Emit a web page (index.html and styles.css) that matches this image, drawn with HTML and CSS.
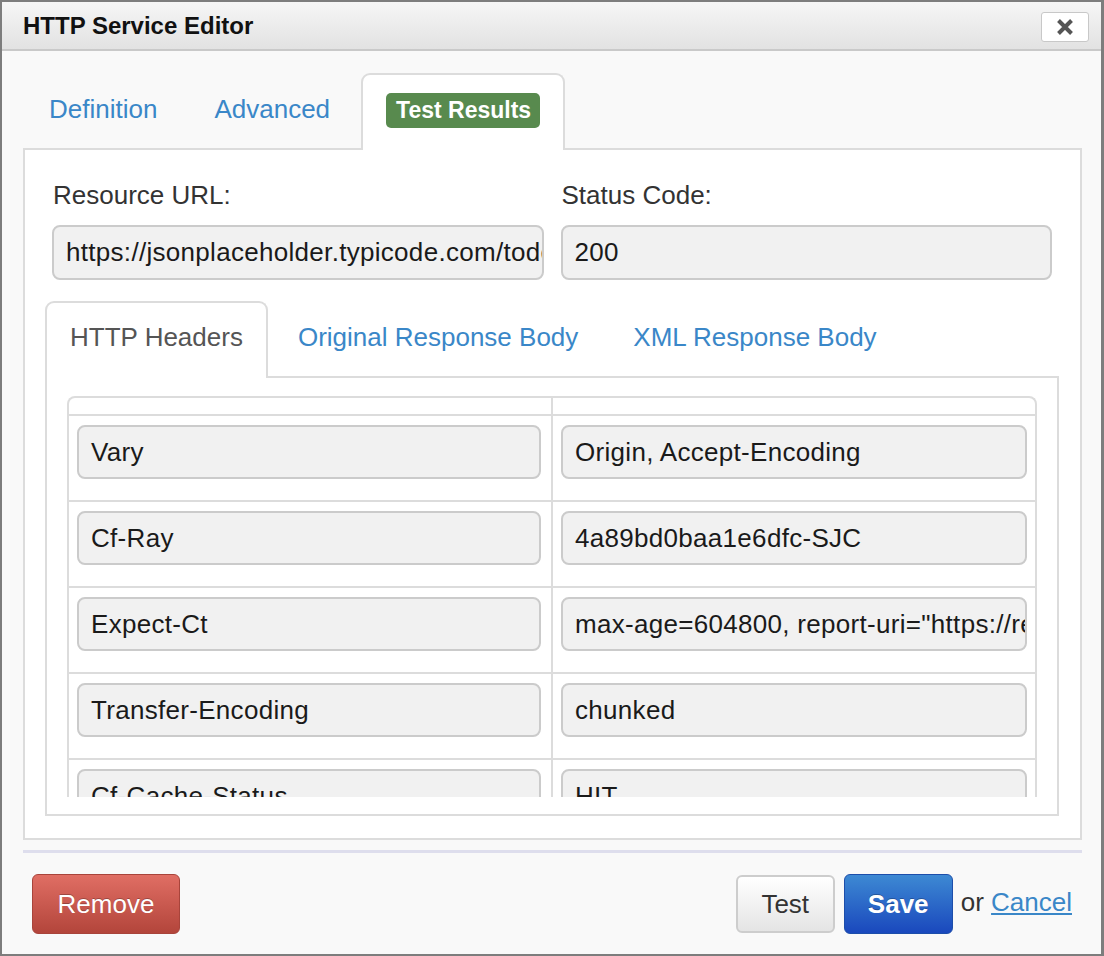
FILE: index.html
```html
<!DOCTYPE html>
<html>
<head>
<meta charset="utf-8">
<title>HTTP Service Editor</title>
<link rel="stylesheet" href="styles.css">
</head>
<body>
<div class="window">
  <div class="titlebar">
    <h1 class="title">HTTP Service Editor</h1>
    <button class="close" aria-label="Close">
      <svg width="18" height="18" viewBox="0 0 18 18"><path d="M2.5 2.5 L15.5 15.5 M15.5 2.5 L2.5 15.5" stroke="#555" stroke-width="4" fill="none"/></svg>
    </button>
  </div>
  <div class="content">
    <ul class="tabs">
      <li class="tab">Definition</li>
      <li class="tab">Advanced</li>
      <li class="tab active"><span class="badge">Test Results</span></li>
    </ul>
    <div class="panel">
      <div class="form-row">
        <div class="field">
          <div class="label">Resource URL:</div>
          <div class="input">https://jsonplaceholder.typicode.com/todos/1</div>
        </div>
        <div class="field">
          <div class="label">Status Code:</div>
          <div class="input">200</div>
        </div>
      </div>
      <ul class="tabs inner">
        <li class="tab active plain">HTTP Headers</li>
        <li class="tab">Original Response Body</li>
        <li class="tab">XML Response Body</li>
      </ul>
      <div class="subpanel">
        <div class="scroll">
          <div class="grid">
            <div class="grid-head"><div class="hcell"></div><div class="hcell"></div></div>
            <div class="row"><div class="cell"><div class="input">Vary</div></div><div class="cell"><div class="input">Origin, Accept-Encoding</div></div></div>
            <div class="row"><div class="cell"><div class="input">Cf-Ray</div></div><div class="cell"><div class="input">4a89bd0baa1e6dfc-SJC</div></div></div>
            <div class="row"><div class="cell"><div class="input">Expect-Ct</div></div><div class="cell"><div class="input">max-age=604800, report-uri="https://report-uri.cloudflare.com/cdn-cgi/beacon/expect-ct"</div></div></div>
            <div class="row"><div class="cell"><div class="input">Transfer-Encoding</div></div><div class="cell"><div class="input">chunked</div></div></div>
            <div class="row"><div class="cell"><div class="input">Cf-Cache-Status</div></div><div class="cell"><div class="input">HIT</div></div></div>
            <div class="row"><div class="cell"><div class="input">Content-Type</div></div><div class="cell"><div class="input">application/json; charset=utf-8</div></div></div>
          </div>
        </div>
      </div>
    </div>
    <div class="separator"></div>
    <div class="footer">
      <button class="btn btn-danger">Remove</button>
      <div class="actions">
        <button class="btn btn-default">Test</button>
        <button class="btn btn-primary">Save</button>
        <span class="or">or <a class="cancel" href="#">Cancel</a></span>
      </div>
    </div>
  </div>
</div>
</body>
</html>
```

FILE: styles.css
```css
* { box-sizing: border-box; }
html, body { margin: 0; padding: 0; }
body {
  font-family: "Liberation Sans", Arial, Helvetica, sans-serif;
  background: #f9f9f9;
}
.window {
  width: 1104px;
  height: 956px;
  border: 2px solid #7d7d7d;
  border-right-width: 3px;
  background: #f9f9f9;
  display: flex;
  flex-direction: column;
}
.titlebar {
  height: 49px;
  background: linear-gradient(#f6f6f6, #e2e2e2);
  border-bottom: 2px solid #c9c9c9;
  display: flex;
  align-items: center;
  justify-content: space-between;
  padding: 0 12px 0 21px;
}
.title {
  margin: 0;
  font-size: 24px;
  font-weight: bold;
  color: #111;
  line-height: 1;
  padding-top: 1px;
}
.close {
  width: 48px;
  height: 30px;
  background: #fff;
  border: 1px solid #c8c8c8;
  border-radius: 3px;
  padding: 0;
  display: flex;
  align-items: center;
  justify-content: center;
  margin-top: 2px;
}
.content {
  flex: 1;
  padding: 22px 19px 0 21px;
}
.tabs {
  list-style: none;
  margin: 0;
  padding: 0;
  display: flex;
  height: 75px;
}
.tab {
  height: 77px;
  padding: 0 24px 6px;
  margin-right: 5px;
  border: 2px solid transparent;
  border-bottom: none;
  display: flex;
  align-items: center;
  font-size: 26px;
  color: #3a87c8;
  position: relative;
  z-index: 1;
}
.tab.active {
  background: #fff;
  border-color: #dcdcdc;
  border-radius: 9px 9px 0 0;
  padding-left: 23px;
  padding-right: 23px;
}
.tab.plain { color: #555; }
.inner .tab {
  padding-left: 23px;
  padding-right: 23px;
  margin-right: 5px;
}
.badge {
  background: #588a4e;
  color: #fff;
  font-weight: bold;
  font-size: 23px;
  border-radius: 5px;
  padding: 0 9px 0 10px;
  height: 35px;
  line-height: 35px;
  display: inline-block;
  margin-top: 2px;
}
.panel {
  background: #fff;
  border: 2px solid #dcdcdc;
  height: 692px;
  padding: 30px 21px 0 20px;
}
.form-row {
  display: flex;
  gap: 17px;
  margin: 0 7px 0 7px;
}
.field { flex: 1; min-width: 0; }
.label {
  font-size: 26px;
  line-height: 30px;
  color: #333;
  margin: 0 0 15px 1px;
}
.input {
  height: 55px;
  border: 2px solid #cbcbcb;
  border-radius: 8px;
  background: #f1f1f1;
  font-size: 26px;
  line-height: 51px;
  letter-spacing: 0.3px;
  color: #1a1a1a;
  padding: 0 0 0 12px;
  white-space: nowrap;
  overflow: hidden;
}
.inner { margin-top: 21px; }
.subpanel {
  border: 2px solid #dcdcdc;
  background: #fff;
  padding: 18px 20px 17px;
}
.scroll {
  height: 401px;
  overflow: hidden;
}
.grid {
  border: 2px solid #dcdcdc;
  border-bottom: none;
  border-radius: 8px 8px 0 0;
}
.grid-head, .row {
  display: grid;
  grid-template-columns: 484px 1fr;
  border-bottom: 2px solid #dcdcdc;
}
.grid-head { height: 18px; }
.grid-head .hcell:first-child, .row .cell:first-child {
  border-right: 2px solid #dcdcdc;
}
.cell {
  padding: 9px 8px 21px 8px;
  min-width: 0;
}
.row .cell:first-child { padding-right: 10px; }
.row .input { height: 54px; line-height: 50px; }
.separator {
  height: 3px;
  background: #dedeed;
  margin-top: 10px;
}
.footer {
  display: flex;
  justify-content: space-between;
  align-items: center;
  padding: 21px 10px 0 9px;
}
.actions {
  display: flex;
  align-items: center;
}
.btn {
  font-family: "Liberation Sans", Arial, Helvetica, sans-serif;
  font-size: 26px;
  height: 60px;
  border-radius: 6px;
  padding: 0;
  cursor: pointer;
}
.btn-danger {
  width: 148px;
  color: #fff;
  background: linear-gradient(#e06e64, #b3453b);
  border: 1px solid #a8443b;
  text-shadow: 0 -1px 0 rgba(0,0,0,0.25);
}
.btn-default {
  width: 99px;
  height: 58px;
  color: #333;
  background: linear-gradient(#ffffff, #e4e4e4);
  border: 2px solid #cdcdcd;
  margin-right: 9px;
}
.btn-primary {
  width: 109px;
  color: #fff;
  font-weight: bold;
  background: linear-gradient(#3d89d3, #1a48bd);
  border: 1px solid #1d4eaa;
  text-shadow: 0 -1px 0 rgba(0,0,0,0.25);
}
.or {
  font-size: 26px;
  color: #333;
  margin-left: 8px;
  padding-bottom: 4px;
}
.cancel {
  color: #3a87c8;
  text-decoration: underline;
}
```
